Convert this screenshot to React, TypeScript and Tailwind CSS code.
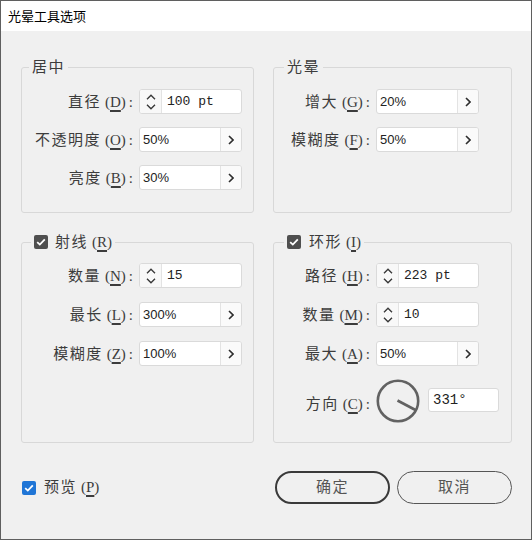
import React from "react";

const cjk = "font-['Liberation_Serif','Noto_Sans_CJK_SC',serif]";

function Label({ text, k, w }: { text: string; k: string; w: string }) {
  return (
    <span className={`${w} shrink-0 whitespace-nowrap pr-[6px] text-right text-[15px] leading-[20px] text-[#3c3c3c] ${cjk}`}>
      <span className="tracking-[1.5px]">{text}</span>
      <span className="ml-[4px]">(</span>
      <span className="underline decoration-[2px] underline-offset-[3px]">{k}</span>)
      <span className="ml-[3px]">:</span>
    </span>
  );
}

function UpDown() {
  return (
    <div className="flex w-[22px] shrink-0 flex-col items-center justify-center gap-[4px] border-r border-[#e3e3e3] bg-[#f8f8f8]">
      <svg width="10" height="6" viewBox="0 0 10 6">
        <polyline points="1,5.2 5,1.2 9,5.2" fill="none" stroke="#3a3a3a" strokeWidth="1.4" />
      </svg>
      <svg width="10" height="6" viewBox="0 0 10 6">
        <polyline points="1,0.8 5,4.8 9,0.8" fill="none" stroke="#3a3a3a" strokeWidth="1.4" />
      </svg>
    </div>
  );
}

function SpinBox({ value }: { value: string }) {
  return (
    <div className="flex h-[25px] w-[103px] overflow-hidden rounded-[3px] border border-[#dadada] bg-white">
      <UpDown />
      <div className="flex items-center pl-[5px] font-['Liberation_Mono',monospace] text-[13px] text-[#222]">
        {value}
      </div>
    </div>
  );
}

function PopBox({ value }: { value: string }) {
  return (
    <div className="flex h-[25px] w-[103px] overflow-hidden rounded-[3px] border border-[#dadada] bg-white">
      <div className="flex w-[80px] items-center pl-[3px] font-['Liberation_Sans',sans-serif] text-[13px] text-[#222]">
        {value}
      </div>
      <div className="flex flex-1 items-center justify-center border-l border-[#e3e3e3] bg-[#fafafa]">
        <svg width="6" height="10" viewBox="0 0 6 10">
          <polyline points="1,1 5,5 1,9" fill="none" stroke="#2e2e2e" strokeWidth="1.6" />
        </svg>
      </div>
    </div>
  );
}

function Check({ blue }: { blue?: boolean }) {
  return (
    <span
      className={`inline-flex h-[14px] w-[14px] items-center justify-center rounded-[2px] ${
        blue ? "bg-[#1f75d6]" : "bg-[#4f4f4f]"
      }`}
    >
      <svg width="10" height="8" viewBox="0 0 10 8">
        <polyline points="1.2,4.2 3.8,6.6 8.8,1.4" fill="none" stroke="#fff" strokeWidth="1.8" />
      </svg>
    </span>
  );
}

function Row({ children }: { children: React.ReactNode }) {
  return <div className="flex h-[25px] items-center">{children}</div>;
}

function Dial() {
  return (
    <svg width="44" height="44" viewBox="0 0 44 44">
      <circle cx="22" cy="22" r="20.2" fill="none" stroke="#626262" strokeWidth="2.6" />
      <line x1="21.5" y1="21.5" x2="39.5" y2="31" stroke="#626262" strokeWidth="2.6" />
    </svg>
  );
}

export default function App() {
  return (
    <div className={`flex h-[540px] w-[532px] flex-col border border-[#5f5f5f] bg-[#f0f0f0] ${cjk}`}>
      <div className="flex h-[30px] shrink-0 items-center bg-white pl-[7px] font-['Noto_Sans_CJK_SC',sans-serif] text-[13px] text-black">
        光晕工具选项
      </div>

      <div className="flex flex-col pl-[20px] pr-[19px]">
        <div className="mt-[26px] flex gap-[19px]">
          <fieldset className="h-[156px] w-[233px] rounded-[3px] border border-[#d8d8d8] pt-[12px]">
            <legend className="ml-[7px] px-[3px] text-[15px] leading-[20px] tracking-[1.5px] text-[#3c3c3c]">居中</legend>
            <div className="flex flex-col gap-[13px]">
              <Row>
                <Label text="直径" k="D" w="w-[117px]" />
                <SpinBox value="100 pt" />
              </Row>
              <Row>
                <Label text="不透明度" k="O" w="w-[117px]" />
                <PopBox value="50%" />
              </Row>
              <Row>
                <Label text="亮度" k="B" w="w-[117px]" />
                <PopBox value="30%" />
              </Row>
            </div>
          </fieldset>

          <fieldset className="h-[156px] w-[239px] rounded-[3px] border border-[#d8d8d8] pt-[12px]">
            <legend className="ml-[10px] px-[3px] text-[15px] leading-[20px] tracking-[1.5px] text-[#3c3c3c]">光晕</legend>
            <div className="flex flex-col gap-[13px]">
              <Row>
                <Label text="增大" k="G" w="w-[102px]" />
                <PopBox value="20%" />
              </Row>
              <Row>
                <Label text="模糊度" k="F" w="w-[102px]" />
                <PopBox value="50%" />
              </Row>
            </div>
          </fieldset>
        </div>

        <div className="mt-[19px] flex gap-[19px]">
          <fieldset className="h-[211px] w-[233px] rounded-[3px] border border-[#d8d8d8] pt-[11px]">
            <legend className="ml-[9px] flex items-center gap-[7px] px-[3px] text-[15px] leading-[20px] text-[#3c3c3c]">
              <Check />
              <span>
                <span className="tracking-[1.5px]">射线</span>
                <span className="ml-[4px]">(</span>
                <span className="underline decoration-[2px] underline-offset-[3px]">R</span>)
              </span>
            </legend>
            <div className="flex flex-col gap-[14px]">
              <Row>
                <Label text="数量" k="N" w="w-[117px]" />
                <SpinBox value="15" />
              </Row>
              <Row>
                <Label text="最长" k="L" w="w-[117px]" />
                <PopBox value="300%" />
              </Row>
              <Row>
                <Label text="模糊度" k="Z" w="w-[117px]" />
                <PopBox value="100%" />
              </Row>
            </div>
          </fieldset>

          <fieldset className="h-[211px] w-[239px] rounded-[3px] border border-[#d8d8d8] pt-[11px]">
            <legend className="ml-[10px] flex items-center gap-[8px] px-[3px] text-[15px] leading-[20px] text-[#3c3c3c]">
              <Check />
              <span>
                <span className="tracking-[1.5px]">环形</span>
                <span className="ml-[4px]">(</span>
                <span className="underline decoration-[2px] underline-offset-[3px]">I</span>)
              </span>
            </legend>
            <div className="flex flex-col gap-[14px]">
              <Row>
                <Label text="路径" k="H" w="w-[102px]" />
                <SpinBox value="223 pt" />
              </Row>
              <Row>
                <Label text="数量" k="M" w="w-[102px]" />
                <SpinBox value="10" />
              </Row>
              <Row>
                <Label text="最大" k="A" w="w-[102px]" />
                <PopBox value="50%" />
              </Row>
            </div>
            <div className="mt-[13px] flex h-[44px] items-center">
              <span className="mt-[6px] flex">
                <Label text="方向" k="C" w="w-[102px]" />
              </span>
              <Dial />
              <div className="ml-[8px] mt-[-2px] flex h-[24px] w-[71px] items-center rounded-[3px] border border-[#dadada] bg-white pl-[4px] font-['Liberation_Mono',monospace] text-[14px] text-[#222]">
                331°
              </div>
            </div>
          </fieldset>
        </div>

        <div className="mt-[28px] flex h-[33px] items-center justify-between">
          <div className="flex items-center gap-[8px] pl-[1px] text-[15px] text-[#3c3c3c]">
            <Check blue />
            <span>
              <span className="tracking-[1.5px]">预览</span>
              <span className="ml-[4px]">(</span>
              <span className="underline decoration-[2px] underline-offset-[3px]">P</span>)
            </span>
          </div>
          <div className="flex gap-[7px]">
            <button className="h-[33px] w-[115px] rounded-full border-2 border-[#3a3a3a] text-[15px] tracking-[1.5px] text-[#555]">
              确定
            </button>
            <button className="h-[33px] w-[115px] rounded-full border border-[#555] text-[15px] tracking-[1.5px] text-[#555]">
              取消
            </button>
          </div>
        </div>
      </div>
    </div>
  );
}
